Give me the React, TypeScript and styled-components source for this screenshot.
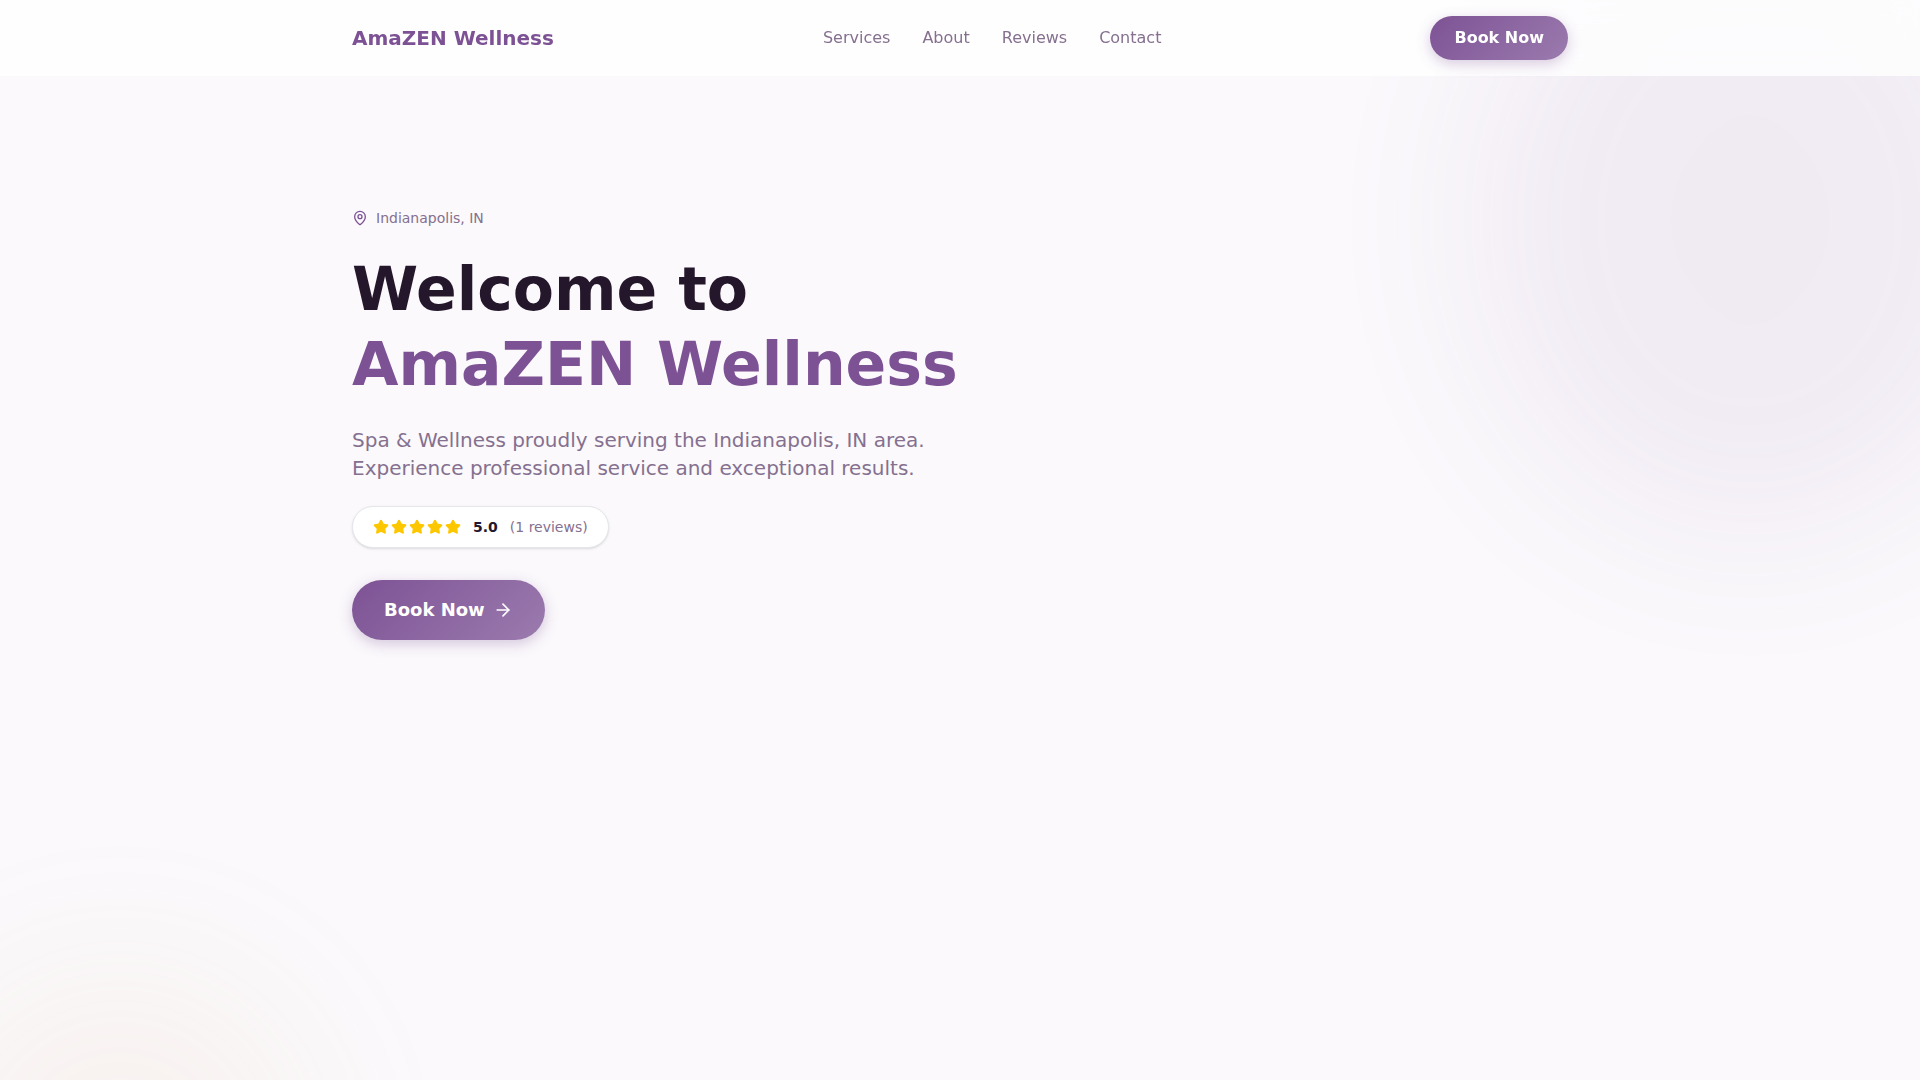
import React from "react";
import styled, { createGlobalStyle } from "styled-components";
import { ArrowRight, MapPin, Star } from "lucide-react";

const color = {
  primary: "#7d5295",
  primaryLight: "#9b7bae",
  ink: "#24172b",
  muted: "#85708f",
  background: "#fbf9fc",
  accent: "#d4a96a",
  star: "#fdc700",
};

const GlobalStyle = createGlobalStyle`
  *, *::before, *::after { box-sizing: border-box; }
  body {
    margin: 0;
    background: ${color.background};
    color: ${color.ink};
    font-family: "DejaVu Sans", sans-serif;
    font-size: 16px;
    line-height: 24px;
  }
  h1, p { margin: 0; }
`;

const Container = styled.div`
  width: 100%;
  max-width: 1280px;
  margin: 0 auto;
  padding: 0 32px;
`;

const Header = styled.header`
  position: sticky;
  top: 0;
  z-index: 10;
  height: 76px;
  background: rgba(255, 255, 255, 0.8);
  backdrop-filter: blur(12px);
`;

const HeaderRow = styled(Container)`
  display: flex;
  align-items: center;
  justify-content: space-between;
  padding-top: 16px;
  padding-bottom: 16px;
`;

const Logo = styled.a`
  color: ${color.primary};
  font-size: 20px;
  font-weight: 700;
  line-height: 28px;
  text-decoration: none;
`;

const Nav = styled.nav`
  display: flex;
  gap: 32px;
`;

const NavLink = styled.a`
  color: ${color.muted};
  text-decoration: none;
`;

const BookButton = styled.button<{ $large?: boolean }>`
  display: inline-flex;
  align-items: center;
  gap: 8px;
  padding: ${(p) => (p.$large ? "16px 32px" : "10px 24px")};
  border: 0;
  border-radius: 9999px;
  background: linear-gradient(135deg, ${color.primary}, ${color.primaryLight});
  box-shadow: 0 4px 14px rgba(125, 82, 149, 0.3);
  color: #fff;
  font-family: inherit;
  font-size: ${(p) => (p.$large ? 18 : 16)}px;
  font-weight: 600;
  line-height: ${(p) => (p.$large ? 28 : 24)}px;
  cursor: pointer;
`;

const Hero = styled.section`
  position: relative;
  min-height: 100vh;
  margin-top: -76px;
  padding: 208px 0 128px;
  overflow: hidden;
`;

const Glow = styled.div`
  position: absolute;
  border-radius: 50%;
  opacity: 0.08;
  filter: blur(80px);
`;

const TopGlow = styled(Glow)`
  top: -100px;
  right: -110px;
  width: 560px;
  height: 640px;
  background: ${color.primary};
`;

const BottomGlow = styled(Glow)`
  bottom: -280px;
  left: -80px;
  width: 400px;
  height: 400px;
  background: ${color.accent};
`;

const HeroContent = styled(Container)`
  position: relative;
  display: flex;
  flex-direction: column;
  align-items: flex-start;
`;

const Location = styled.p`
  display: flex;
  align-items: center;
  gap: 8px;
  color: ${color.muted};
  font-size: 14px;
  line-height: 20px;

  svg { color: ${color.primary}; }
`;

const Title = styled.h1`
  margin-top: 24px;
  font-size: 60px;
  font-weight: 700;
  line-height: 75px;
`;

const TitleName = styled.span`
  display: block;
  color: ${color.primary};
`;

const Lead = styled.p`
  max-width: 576px;
  margin-top: 24px;
  color: ${color.muted};
  font-size: 20px;
  line-height: 28px;
`;

const Rating = styled.div`
  display: flex;
  align-items: center;
  gap: 12px;
  margin: 24px 0 32px;
  padding: 10px 20px;
  border: 1px solid #e5e7eb;
  border-radius: 9999px;
  background: #fff;
  box-shadow: 0 1px 3px rgba(0, 0, 0, 0.1), 0 1px 2px -1px rgba(0, 0, 0, 0.1);
  font-size: 14px;
  line-height: 20px;
`;

const Stars = styled.div`
  display: flex;
  gap: 2px;
  color: ${color.star};
`;

const Reviews = styled.span`
  color: ${color.muted};
`;

const links = ["Services", "About", "Reviews", "Contact"];

export default function App() {
  return (
    <>
      <GlobalStyle />
      <Header>
        <HeaderRow>
          <Logo href="#">AmaZEN Wellness</Logo>
          <Nav aria-label="Main">
            {links.map((link) => (
              <NavLink key={link} href={`#${link.toLowerCase()}`}>
                {link}
              </NavLink>
            ))}
          </Nav>
          <BookButton type="button">Book Now</BookButton>
        </HeaderRow>
      </Header>
      <main>
        <Hero>
          <TopGlow />
          <BottomGlow />
          <HeroContent>
            <Location>
              <MapPin size={16} aria-hidden />
              Indianapolis, IN
            </Location>
            <Title>
              Welcome to <TitleName>AmaZEN Wellness</TitleName>
            </Title>
            <Lead>
              Spa &amp; Wellness proudly serving the Indianapolis, IN area.
              Experience professional service and exceptional results.
            </Lead>
            <Rating>
              <Stars aria-hidden>
                {[1, 2, 3, 4, 5].map((n) => (
                  <Star key={n} size={16} fill="currentColor" />
                ))}
              </Stars>
              <strong>5.0</strong>
              <Reviews>(1 reviews)</Reviews>
            </Rating>
            <BookButton type="button" $large>
              Book Now
              <ArrowRight size={20} aria-hidden />
            </BookButton>
          </HeroContent>
        </Hero>
      </main>
    </>
  );
}
